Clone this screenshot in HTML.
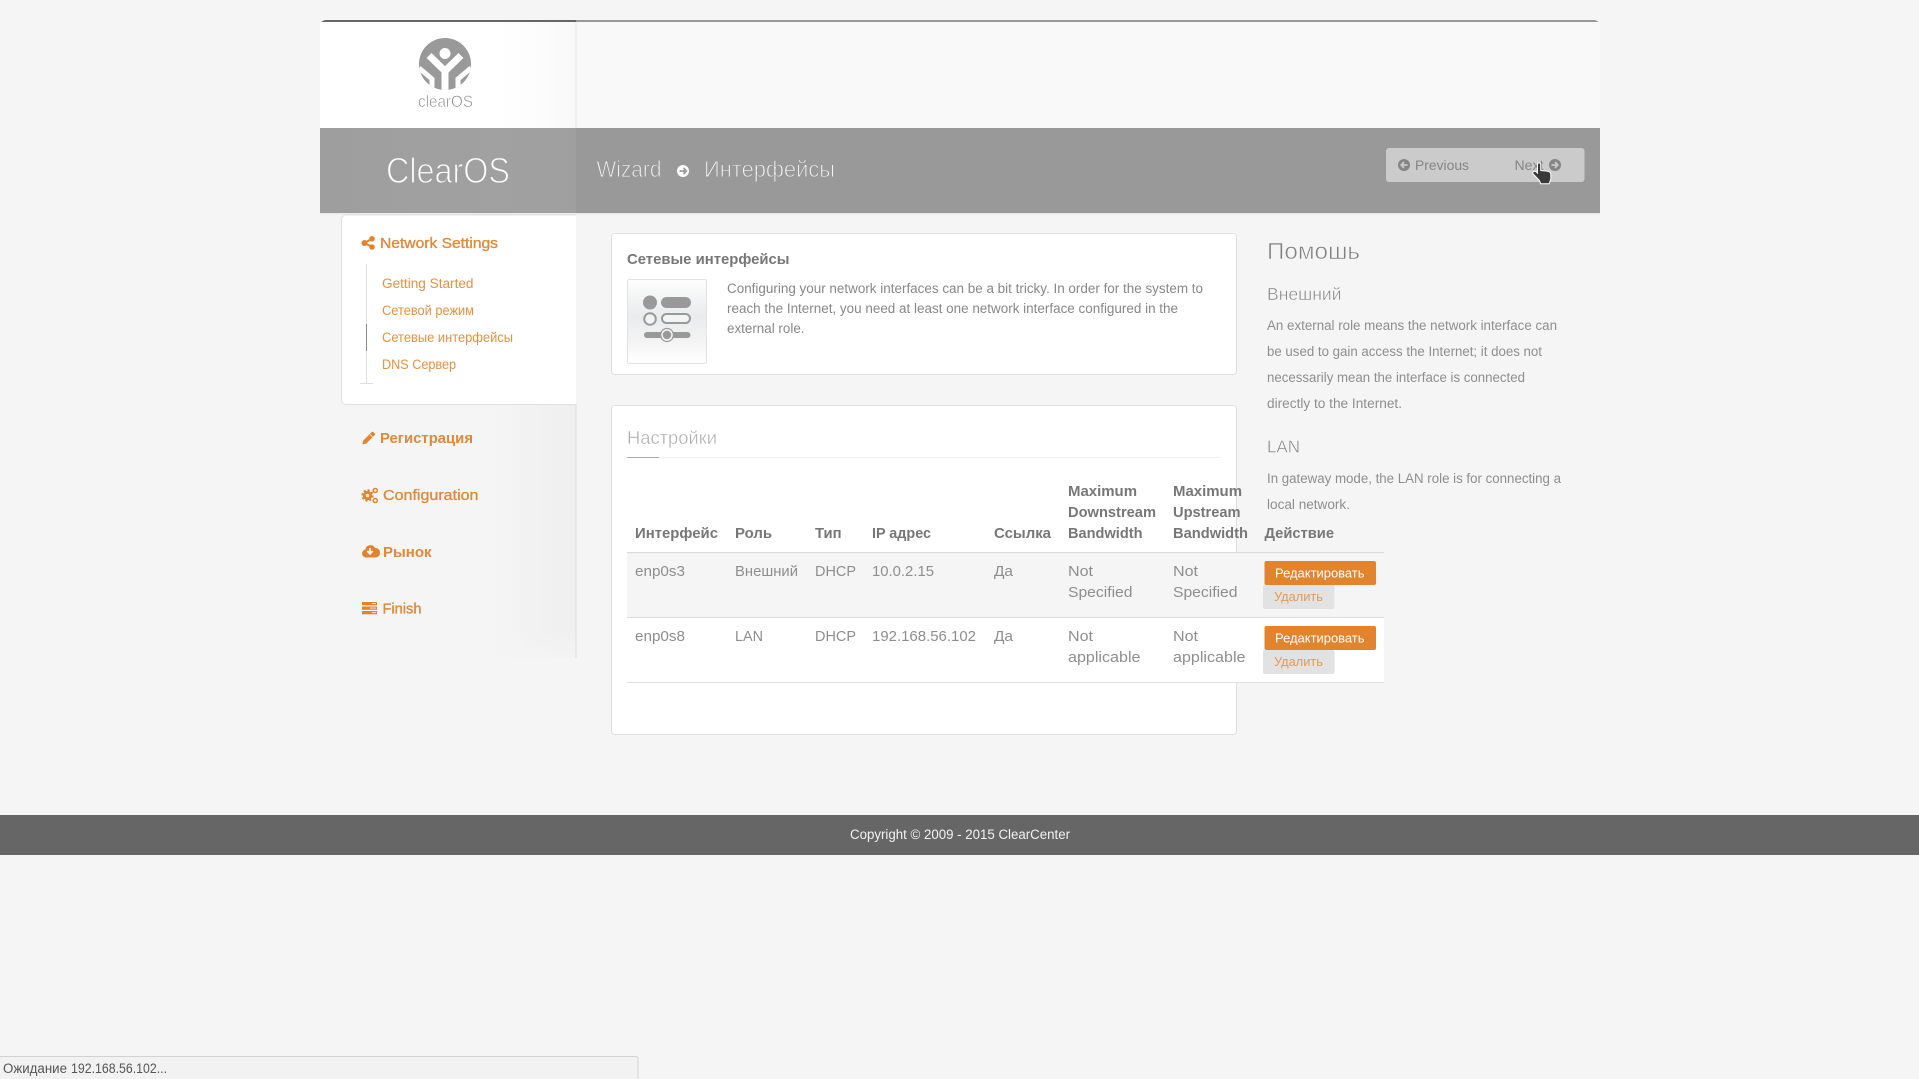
<!DOCTYPE html>
<html lang="ru">
<head>
<meta charset="utf-8">
<title>ClearOS Wizard</title>
<style>
html,body{margin:0;padding:0;background:#f5f5f5;width:1919px;height:1079px;overflow:hidden}
svg{display:block;position:absolute;left:0;top:0}
text{font-family:"Liberation Sans","Noto Sans CJK SC",sans-serif;white-space:pre}
.b{font-size:13.5px;fill:#888}
.h{font-size:15px;font-weight:bold;fill:#777}
.c{font-size:15px;fill:#8e8e8e}
.s{font-size:13.5px;fill:#e4923f}
.m{font-size:15px;fill:#e08a38;stroke:#e08a38;stroke-width:.35}
.mb{font-size:15px;font-weight:bold;fill:#e08a38}
.p{font-size:13.5px;fill:#8e8e8e}
.o{fill:#e2842e}
.g{fill:#999}
</style>
</head>
<body>
<svg width="1919" height="1079" viewBox="0 0 1919 1079" xmlns="http://www.w3.org/2000/svg">
<defs>
<linearGradient id="lh" x1="0" x2="1" y1="0" y2="0"><stop offset=".7" stop-color="#fff"/><stop offset="1" stop-color="#f9f9f9"/></linearGradient>
<linearGradient id="lb" x1="0" x2="1" y1="0" y2="0"><stop offset="0" stop-color="#9e9e9e"/><stop offset=".7" stop-color="#a1a1a1"/><stop offset="1" stop-color="#9f9f9f"/></linearGradient>
<linearGradient id="sg" x1="0" x2="1" y1="0" y2="0"><stop offset="0" stop-color="#f5f5f5"/><stop offset=".64" stop-color="#f5f5f5"/><stop offset=".8" stop-color="#f2f2f2"/><stop offset="1" stop-color="#efefef"/></linearGradient>
<linearGradient id="sf" x1="0" x2="0" y1="0" y2="1"><stop offset="0" stop-color="#f5f5f5" stop-opacity="0"/><stop offset="1" stop-color="#f5f5f5" stop-opacity=".7"/></linearGradient>
<linearGradient id="ib" x1="0" x2="0" y1="0" y2="1"><stop offset="0" stop-color="#fdfdfd"/><stop offset=".45" stop-color="#e9ebec"/><stop offset=".75" stop-color="#f4f4f4"/><stop offset="1" stop-color="#fff"/></linearGradient>
<clipPath id="logoc"><circle cx="445" cy="64" r="26"/></clipPath>
<clipPath id="topc"><path d="M320 128V26a6 6 0 0 1 6-6H1594a6 6 0 0 1 6 6V128z"/></clipPath>
</defs>

<!-- page -->
<rect width="1919" height="1079" fill="#f5f5f5"/>

<!-- header -->
<g clip-path="url(#topc)">
<rect x="576" y="20" width="1024" height="108" fill="#f9f9f9"/>
<rect x="320" y="20" width="256" height="108" fill="url(#lh)"/>
<rect x="320" y="20" width="256" height="2" fill="#666"/>
<rect x="576" y="20" width="1024" height="2" fill="#999"/>
<rect x="575.500" y="22" width="1" height="106" fill="#e6e6e6"/>
</g>
<rect x="320" y="213" width="1280" height="1.500" fill="#e9e9e9"/>
<rect x="576" y="128" width="1024" height="85" fill="#999"/>
<rect x="320" y="128" width="256" height="85" fill="url(#lb)"/>

<!-- logo -->
<circle cx="445" cy="64" r="26" fill="#999"/>
<g clip-path="url(#logoc)" fill="none" stroke="#fff" stroke-linejoin="miter">
<circle cx="445" cy="53.500" r="5.500" fill="#fff" stroke="none"/>
<path d="M429 55.500L445 71V92M461 55.500L445 71" stroke-width="7"/>
<path d="M419 68L432 79V92M471 68L458 79V92" stroke-width="5"/>
</g>
<text x="418" y="107" textLength="55" lengthAdjust="spacingAndGlyphs" font-size="17" fill="#888" stroke="#fff" stroke-width=".55">clearOS</text>

<!-- band titles -->
<text x="386" y="183" textLength="124" lengthAdjust="spacingAndGlyphs" font-size="36" fill="#fff" stroke="#a1a1a1" stroke-width="1.200">ClearOS</text>
<text x="596.500" y="177" textLength="65" lengthAdjust="spacingAndGlyphs" font-size="23" fill="#f4f4f4" stroke="#999" stroke-width=".9">Wizard</text>
<circle cx="683" cy="171" r="6" fill="#fff"/>
<path d="M679.500 171H686M683.500 168l2.800 3-2.800 3" fill="none" stroke="#999" stroke-width="1.800"/>
<text x="704" y="177" textLength="131" lengthAdjust="spacingAndGlyphs" font-size="23" fill="#f4f4f4" stroke="#999" stroke-width=".9">Интерфейсы</text>

<!-- prev / next -->
<rect x="1386" y="148" width="198.500" height="34" rx="3" fill="#cbcbcb"/>
<circle cx="1404" cy="165" r="6" fill="#858585"/>
<path d="M1407.500 165H1401.500M1404 162l-2.800 3 2.800 3" fill="none" stroke="#cbcbcb" stroke-width="1.700"/>
<text x="1415" y="170" textLength="54" lengthAdjust="spacingAndGlyphs" font-size="14" fill="#858585">Previous</text>
<text x="1514.500" y="170" textLength="29" lengthAdjust="spacingAndGlyphs" font-size="14" fill="#858585">Next</text>
<circle cx="1555" cy="165" r="6" fill="#858585"/>
<path d="M1551.500 165H1557.500M1555 162l2.800 3-2.800 3" fill="none" stroke="#cbcbcb" stroke-width="1.700"/>
<path d="M1537.500 164.500c0-2.200 3.200-2.200 3.200 0v6l6.300.6c2.300.3 3.800 1.200 3.800 3.300v4.600l-1.600 4.800h-8.400l-1.500-3.400-6.200-6.600c-1.200-2 1.500-3.400 3.200-1.800l1.200 1.100z" fill="#3a3a3a" stroke="#fff" stroke-width="1"/>

<!-- sidebar -->
<rect x="341" y="404" width="235" height="254" fill="url(#sg)"/>
<rect x="341" y="630" width="235" height="28" fill="url(#sf)"/>
<rect x="575.500" y="404" width="1" height="254" fill="#ddd"/>
<path d="M576 215H346a4.500 4.500 0 0 0-4.500 4.500V400a4.500 4.500 0 0 0 4.500 4.500H576" fill="#fff" stroke="#e0e0e0" stroke-width="1"/>

<!-- share icon -->
<g class="o"><circle cx="364.500" cy="243" r="3"/><circle cx="372" cy="238.800" r="2.800"/><circle cx="372" cy="247" r="2.800"/></g>
<path d="M364.500 243L372 238.800M364.500 243L372 247" stroke="#e2842e" stroke-width="2"/>
<text class="m" x="380" y="248" textLength="118" lengthAdjust="spacingAndGlyphs">Network Settings</text>

<rect x="366" y="264" width="1" height="119" fill="#ddd"/>
<rect x="366" y="324" width="1" height="27" fill="#888"/>
<rect x="360" y="383" width="13" height="1" fill="#ddd"/>
<text class="s" x="382" y="288" textLength="91.500" lengthAdjust="spacingAndGlyphs">Getting Started</text>
<text class="s" x="382" y="315" textLength="92" lengthAdjust="spacingAndGlyphs">Сетевой режим</text>
<text class="s" x="382" y="342" textLength="131" lengthAdjust="spacingAndGlyphs">Сетевые интерфейсы</text>
<text class="s" x="382" y="369" textLength="74" lengthAdjust="spacingAndGlyphs">DNS Сервер</text>

<!-- pencil -->
<path d="M362.300 444.500l1-4 8.500-8.500a1 1 0 0 1 1.400 0l1.600 1.600a1 1 0 0 1 0 1.400l-8.500 8.500z" fill="#e2842e"/>
<path d="M370 434.500l3.200 3.200" stroke="#f5f5f5" stroke-width=".7"/>
<text class="mb" x="380" y="443" textLength="93" lengthAdjust="spacingAndGlyphs">Регистрация</text>

<!-- gears -->
<g fill="none" stroke="#e2842e">
<circle cx="367.500" cy="495.500" r="3.200" stroke-width="2.800"/>
<circle cx="367.500" cy="495.500" r="5.200" stroke-width="2" stroke-dasharray="2.100 1.980"/>
<circle cx="375.300" cy="490.500" r="2" stroke-width="1.500"/>
<circle cx="375.300" cy="500.500" r="2" stroke-width="1.500"/>
</g>
<text class="m" x="383" y="500" textLength="95.500" lengthAdjust="spacingAndGlyphs">Configuration</text>

<!-- cloud -->
<path d="M366 557.500a4 4 0 0 1-.8-7.900 5.300 5.300 0 0 1 9.900-1.700 4.800 4.800 0 0 1 .4 9.600z" fill="#e2842e"/>
<path d="M370 548v5.500M367.300 551l2.700 3 2.700-3" fill="none" stroke="#f5f5f5" stroke-width="1.700"/>
<text class="mb" x="383" y="557" textLength="48.500" lengthAdjust="spacingAndGlyphs">Рынок</text>

<!-- list -->
<g class="o"><rect x="362" y="602" width="15" height="3.300"/><rect x="362" y="606.500" width="15" height="3.300"/><rect x="362" y="611" width="15" height="3.300"/></g>
<rect x="372" y="603" width="4" height="1" fill="#f5e0cc"/><rect x="370" y="607.600" width="6" height="1" fill="#f5e0cc"/><rect x="372" y="612.100" width="4" height="1" fill="#f5e0cc"/>
<text class="m" x="382.500" y="613.500" textLength="39" lengthAdjust="spacingAndGlyphs">Finish</text>

<!-- card 1 -->
<rect x="611.500" y="233.500" width="625" height="141" rx="3" fill="#fff" stroke="#e0e0e0"/>
<text x="627" y="264" textLength="162.500" lengthAdjust="spacingAndGlyphs" font-size="15" font-weight="bold" fill="#777">Сетевые интерфейсы</text>
<rect x="627.500" y="279.500" width="79" height="84" rx="2" fill="url(#ib)" stroke="#e2e2e2"/>
<circle cx="650" cy="302.500" r="7" fill="#999"/>
<rect x="661" y="297" width="30" height="11" rx="5.500" fill="#999"/>
<circle cx="650" cy="319" r="5.800" fill="#f2f3f3" stroke="#999" stroke-width="2"/>
<rect x="662" y="314" width="28" height="9" rx="4.500" fill="#f2f3f3" stroke="#999" stroke-width="2"/>
<rect x="644" y="332" width="46.500" height="6" rx="3" fill="#999"/>
<circle cx="667" cy="335" r="6.500" fill="none" stroke="#999" stroke-width="1.200"/>
<circle cx="667" cy="335" r="5" fill="#999" stroke="#f4f4f4" stroke-width="1.500"/>
<text class="b" x="727" y="293" textLength="476" lengthAdjust="spacingAndGlyphs">Configuring your network interfaces can be a bit tricky. In order for the system to</text>
<text class="b" x="727" y="313" textLength="451" lengthAdjust="spacingAndGlyphs">reach the Internet, you need at least one network interface configured in the</text>
<text class="b" x="727" y="333" textLength="77.500" lengthAdjust="spacingAndGlyphs">external role.</text>

<!-- card 2 -->
<rect x="611.500" y="405.500" width="625" height="329" rx="3" fill="#fff" stroke="#e0e0e0"/>
<text x="627" y="444" textLength="90" lengthAdjust="spacingAndGlyphs" font-size="18.500" fill="#a8a8a8" stroke="#fff" stroke-width=".45">Настройки</text>
<rect x="627" y="457" width="593" height="1" fill="#efefef"/>
<rect x="627" y="457" width="32" height="1" fill="#aaa"/>

<!-- table rows -->
<rect x="627" y="553" width="757" height="64" fill="#f5f5f5"/>
<rect x="627" y="618" width="757" height="64" fill="#fff"/>
<rect x="627" y="552" width="757" height="1.300" fill="#dcdcdc"/>
<rect x="627" y="617" width="757" height="1" fill="#dedede"/>
<rect x="627" y="682" width="757" height="1" fill="#dedede"/>

<!-- thead -->
<text class="h" x="635" y="538" textLength="83" lengthAdjust="spacingAndGlyphs">Интерфейс</text>
<text class="h" x="735" y="538" textLength="37" lengthAdjust="spacingAndGlyphs">Роль</text>
<text class="h" x="815" y="538" textLength="26.500" lengthAdjust="spacingAndGlyphs">Тип</text>
<text class="h" x="872" y="538" textLength="59" lengthAdjust="spacingAndGlyphs">IP адрес</text>
<text class="h" x="994" y="538" textLength="57" lengthAdjust="spacingAndGlyphs">Ссылка</text>
<text class="h" x="1068" y="496" textLength="69" lengthAdjust="spacingAndGlyphs">Maximum</text>
<text class="h" x="1068" y="517" textLength="88" lengthAdjust="spacingAndGlyphs">Downstream</text>
<text class="h" x="1068" y="538" textLength="74.500" lengthAdjust="spacingAndGlyphs">Bandwidth</text>
<text class="h" x="1173" y="496" textLength="69" lengthAdjust="spacingAndGlyphs">Maximum</text>
<text class="h" x="1173" y="517" textLength="67.500" lengthAdjust="spacingAndGlyphs">Upstream</text>
<text class="h" x="1173" y="538" textLength="75" lengthAdjust="spacingAndGlyphs">Bandwidth</text>
<text class="h" x="1264.500" y="538" textLength="69.500" lengthAdjust="spacingAndGlyphs">Действие</text>

<!-- row 1 -->
<text class="c" x="635" y="576" textLength="50" lengthAdjust="spacingAndGlyphs">enp0s3</text>
<text class="c" x="735" y="576" textLength="63" lengthAdjust="spacingAndGlyphs">Внешний</text>
<text class="c" x="815" y="576" textLength="41" lengthAdjust="spacingAndGlyphs">DHCP</text>
<text class="c" x="872" y="576" textLength="62" lengthAdjust="spacingAndGlyphs">10.0.2.15</text>
<text class="c" x="994" y="576" textLength="19" lengthAdjust="spacingAndGlyphs">Да</text>
<text class="c" x="1068" y="576" textLength="25" lengthAdjust="spacingAndGlyphs">Not</text>
<text class="c" x="1068" y="597" textLength="64.500" lengthAdjust="spacingAndGlyphs">Specified</text>
<text class="c" x="1173" y="576" textLength="25" lengthAdjust="spacingAndGlyphs">Not</text>
<text class="c" x="1173" y="597" textLength="64.500" lengthAdjust="spacingAndGlyphs">Specified</text>
<rect x="1264.500" y="561" width="111.500" height="24" rx="2" fill="#e2842e"/>
<text x="1275" y="577.500" textLength="89.500" lengthAdjust="spacingAndGlyphs" font-size="13" fill="#fff">Редактировать</text>
<rect x="1263" y="585" width="71.500" height="24" rx="2" fill="#e2e2e2"/>
<text x="1274" y="601" textLength="49" lengthAdjust="spacingAndGlyphs" font-size="13" fill="#e69a55">Удалить</text>

<!-- row 2 -->
<text class="c" x="635" y="641" textLength="50" lengthAdjust="spacingAndGlyphs">enp0s8</text>
<text class="c" x="735" y="641" textLength="28" lengthAdjust="spacingAndGlyphs">LAN</text>
<text class="c" x="815" y="641" textLength="41" lengthAdjust="spacingAndGlyphs">DHCP</text>
<text class="c" x="872" y="641" textLength="104" lengthAdjust="spacingAndGlyphs">192.168.56.102</text>
<text class="c" x="994" y="641" textLength="19" lengthAdjust="spacingAndGlyphs">Да</text>
<text class="c" x="1068" y="641" textLength="25" lengthAdjust="spacingAndGlyphs">Not</text>
<text class="c" x="1068" y="662" textLength="72.500" lengthAdjust="spacingAndGlyphs">applicable</text>
<text class="c" x="1173" y="641" textLength="25" lengthAdjust="spacingAndGlyphs">Not</text>
<text class="c" x="1173" y="662" textLength="72.500" lengthAdjust="spacingAndGlyphs">applicable</text>
<rect x="1264.500" y="626" width="111.500" height="24" rx="2" fill="#e2842e"/>
<text x="1275" y="642.500" textLength="89.500" lengthAdjust="spacingAndGlyphs" font-size="13" fill="#fff">Редактировать</text>
<rect x="1263" y="650" width="71.500" height="24" rx="2" fill="#e2e2e2"/>
<text x="1274" y="666" textLength="49" lengthAdjust="spacingAndGlyphs" font-size="13" fill="#e69a55">Удалить</text>

<!-- help -->
<text x="1267" y="259" textLength="93" lengthAdjust="spacingAndGlyphs" font-size="23.500" fill="#808080" stroke="#f5f5f5" stroke-width=".6">Помошь</text>
<text x="1267" y="300" textLength="74.500" lengthAdjust="spacingAndGlyphs" font-size="17.500" fill="#808080" stroke="#f5f5f5" stroke-width=".5">Внешний</text>
<text class="p" x="1267" y="330" textLength="290" lengthAdjust="spacingAndGlyphs">An external role means the network interface can</text>
<text class="p" x="1267" y="356" textLength="275" lengthAdjust="spacingAndGlyphs">be used to gain access the Internet; it does not</text>
<text class="p" x="1267" y="382" textLength="258" lengthAdjust="spacingAndGlyphs">necessarily mean the interface is connected</text>
<text class="p" x="1267" y="408" textLength="135" lengthAdjust="spacingAndGlyphs">directly to the Internet.</text>
<text x="1267" y="452.500" textLength="33" lengthAdjust="spacingAndGlyphs" font-size="17.500" fill="#808080" stroke="#f5f5f5" stroke-width=".5">LAN</text>
<text class="p" x="1267" y="483" textLength="294" lengthAdjust="spacingAndGlyphs">In gateway mode, the LAN role is for connecting a</text>
<text class="p" x="1267" y="509" textLength="83" lengthAdjust="spacingAndGlyphs">local network.</text>

<!-- footer -->
<rect x="0" y="815" width="1919" height="40" fill="#666"/>
<text x="850" y="839" textLength="220" lengthAdjust="spacingAndGlyphs" font-size="13.500" fill="#f2f2f2">Copyright © 2009 - 2015 ClearCenter</text>

<!-- status bar -->
<path d="M-1 1056.500H636a2 2 0 0 1 2 2V1080H-1z" fill="#f2f2f2" stroke="#d2d2d2"/>
<text x="3" y="1073" textLength="64" lengthAdjust="spacingAndGlyphs" font-size="13.500" fill="#555">Ожидание</text>
<text x="71" y="1073" textLength="96" lengthAdjust="spacingAndGlyphs" font-size="13.500" fill="#555">192.168.56.102...</text>
</svg>
</body>
</html>
